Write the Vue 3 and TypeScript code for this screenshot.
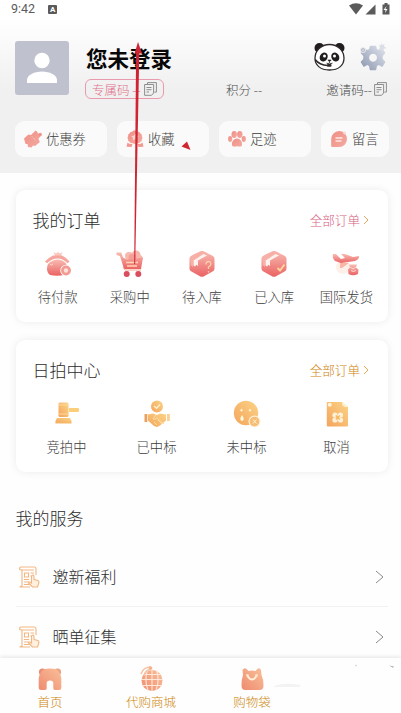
<script setup lang="ts">
interface Entry {
  label: string
  icon: string
}

const shortcuts: Entry[] = [
  { label: '优惠券', icon: 'coupon' },
  { label: '收藏', icon: 'badge' },
  { label: '足迹', icon: 'paw' },
  { label: '留言', icon: 'chat' },
]
const orders: Entry[] = [
  { label: '待付款', icon: 'purse' },
  { label: '采购中', icon: 'cart' },
  { label: '待入库', icon: 'boxq' },
  { label: '已入库', icon: 'boxok' },
  { label: '国际发货', icon: 'plane' },
]
const auctions: Entry[] = [
  { label: '竞拍中', icon: 'gavel' },
  { label: '已中标', icon: 'hands' },
  { label: '未中标', icon: 'sad' },
  { label: '取消', icon: 'cancel' },
]
const services: string[] = ['邀新福利', '晒单征集']
const tabs: Entry[] = [
  { label: '首页', icon: 'home' },
  { label: '代购商城', icon: 'globe' },
  { label: '购物袋', icon: 'bag' },
]
</script>

<template>
  <div class="screen">
    <svg class="defs" width="0" height="0" aria-hidden="true">
      <defs>
        <linearGradient id="pink" x1="0" y1="0" x2="0" y2="1">
          <stop offset="0" stop-color="#f8bcb2" /><stop offset="1" stop-color="#ea6263" />
        </linearGradient>
        <linearGradient id="soft" x1="0" y1="0" x2="1" y2="1">
          <stop offset="0" stop-color="#ef8f87" /><stop offset="1" stop-color="#f4aaa0" />
        </linearGradient>
        <linearGradient id="gold" x1="1" y1="0" x2="0" y2="1">
          <stop offset="0" stop-color="#fbd487" /><stop offset="1" stop-color="#f4a45c" />
        </linearGradient>
        <linearGradient id="peach" x1="1" y1="0" x2="0" y2="1">
          <stop offset="0" stop-color="#f9c09a" /><stop offset="1" stop-color="#ef8b6f" />
        </linearGradient>
        <linearGradient id="steel" x1="1" y1="0" x2="0" y2="1">
          <stop offset="0" stop-color="#dfe3ec" /><stop offset="1" stop-color="#8d98b0" />
        </linearGradient>
      </defs>
    </svg>

    <header class="header">
      <div class="status">
        <span class="clock">9:42</span>
        <span class="status-app">A</span>
        <svg class="signals" width="42" height="14" viewBox="0 0 42 14">
          <path d="M0 3.500Q7-.8 14 3.500L7 12.500Z" fill="#5b5b5b" />
          <path d="M26.500 2.500V12.500H16.500Z" fill="#5b5b5b" />
          <path d="M33.500 2.500h2V1h3v1.500h2v10h-7Z" fill="#5b5b5b" />
          <path d="M37.500 4l-3 4h2l-.5 3 2.500-4h-2Z" fill="#fff" />
        </svg>
      </div>

      <div class="profile">
        <div class="avatar">
          <svg width="54" height="54" viewBox="0 0 54 54">
            <circle cx="27" cy="19.500" r="7.700" fill="#fff" />
            <path d="M12 42v-3c0-5 7.500-8.500 15-8.500S42 34 42 39v3Z" fill="#fff" />
          </svg>
        </div>
        <div class="account">
          <div class="name-row">
            <h1 class="name">您未登录</h1>
            <div class="tools">
              <svg width="31" height="29" viewBox="0 0 31 29">
                <circle cx="5.500" cy="6" r="5" fill="#201c1f" />
                <circle cx="25.500" cy="6" r="5" fill="#201c1f" />
                <path d="M15.500 2.500C24 2.500 30 9 30 16S25 28 15.500 28 1 23 1 16 7 2.500 15.500 2.500Z" fill="#fff" stroke="#302a2d" stroke-width="1.300" />
                <ellipse cx="9.700" cy="15" rx="3.800" ry="4.700" transform="rotate(30 9.700 15)" fill="#201c1f" />
                <ellipse cx="21.300" cy="15" rx="3.800" ry="4.700" transform="rotate(-30 21.300 15)" fill="#201c1f" />
                <circle cx="10.500" cy="14" r="1.500" fill="#fff" />
                <circle cx="20.500" cy="14" r="1.500" fill="#fff" />
                <path d="M13.800 18h3.400l-1.700 1.700ZM15.500 19.500v1.500M12.500 21q1.500 1.200 3 0q1.500 1.200 3 0" fill="#201c1f" stroke="#201c1f" stroke-width=".6" />
                <path d="M1.200 17.500q4 5.500 12.500 6" fill="none" stroke="#302a2d" stroke-width="1.500" />
                <rect x="13" y="22" width="4.500" height="2.800" rx="1" fill="#302a2d" />
              </svg>
              <svg width="30" height="30" viewBox="0 0 30 30">
                <path fill="url(#steel)" fill-rule="evenodd" stroke="url(#steel)" stroke-width="1.500" stroke-linejoin="round" d="M12.500 4.500h5l.8 3.200 2.500 1.100L24 7l2.500 4-2.500 2.800v3.400l2.500 2.800-2.500 4-3.200-1.800-2.500 1.300-.8 4h-5l-.8-4-2.500-1.300L6 24l-2.500-4L6 17.200v-3.400L3.500 11 6 7l3.200 1.800 2.500-1.100ZM15 11a4.700 4.700 0 1 0 .1 0Z" />
                <circle cx="5" cy="8" r="2.500" fill="#b1b9ca" stroke="#eee" /><circle cx="5" cy="8" r=".8" fill="#eee" />
                <path d="M23 .5l1 2.500 2.500-1-.5 2.500 2.500 1.500-3 1-.5 2.500-2-2-2.500.5 1.500-2.500-1-2.500 2 .2Z" fill="#dadee6" />
              </svg>
            </div>
          </div>
          <div class="meta-row">
            <div class="code-tag">
              <span>专属码 --</span>
              <svg class="copy" width="13" height="14" viewBox="0 0 13 14">
                <path d="M3.500 2.500V.6h8.900v9.500h-2M.6 2.500h9v8.500l-2 2.300h-7ZM2.500 5.500h5M2.500 7.700h5M2.500 10h2.500" />
              </svg>
            </div>
            <span class="points">积分 --</span>
            <div class="invite">
              <span>邀请码--</span>
              <svg class="copy" width="13" height="14" viewBox="0 0 13 14">
                <path d="M3.500 2.500V.6h8.900v9.500h-2M.6 2.500h9v8.500l-2 2.300h-7ZM2.500 5.500h5M2.500 7.700h5M2.500 10h2.500" />
              </svg>
            </div>
          </div>
        </div>
      </div>

      <nav class="shortcuts">
        <div v-for="s in shortcuts" :key="s.label" class="pill">
          <svg width="18" height="18" viewBox="0 0 18 18">
            <g v-if="s.icon === 'coupon'">
              <path d="M0 8.500 4.500 4.500 7 5 11.500.5l2 1.500q-.3 2 1.700 1.700l1.300 2.800-2 2 .5 2 1 1.500-5 4-2-.5-1.500 2-3.500-.5-.5-3-2 0Z" fill="url(#soft)" />
              <path d="M8 6.500l4 4.500" stroke="#fad4ce" stroke-dasharray="1 1" /><circle cx="16.200" cy="4.500" r="1.700" fill="#ef9289" />
            </g>
            <g v-else-if="s.icon === 'badge'">
              <path d="M9 .5q2-.5 2.700 1.300 2.300-.3 2.800 1.700 2 .8 1.300 2.800 1.500 1.500.1 3 .5 2-1.500 2.500-.9 2-2.900 1.300Q9 14.800 6.500 13.100q-2 .7-2.900-1.300-2-.5-1.500-2.500-1.400-1.500.1-3-.7-2 1.300-2.800.5-2 2.800-1.700Q7 0 9 .5Z" fill="url(#soft)" />
              <path d="M1.500 12.500q2 2 5 1.500l-1 3-5-.3ZM16.500 12.500q-2 2-5 1.500l1 3 5-.3Z" fill="#f09a91" /><path d="M9 3.500l1.200 2.300 2.500.3-1.800 1.800.4 2.600L9 9.300l-2.300 1.200.4-2.600-1.800-1.800 2.500-.3Z" fill="#fbd7d2" />
            </g>
            <g v-else-if="s.icon === 'paw'" fill="url(#soft)">
              <ellipse cx="6.200" cy="4.500" rx="2.700" ry="3.400" /><ellipse cx="11.800" cy="4.500" rx="2.700" ry="3.400" />
              <ellipse cx="2.200" cy="9" rx="2.100" ry="2.900" /><ellipse cx="15.800" cy="9" rx="2.100" ry="2.900" />
              <path d="M9 8.500c3 0 5.500 3.500 5 6.200-.5 3-3 1.500-5 1.500s-4.500 1.500-5-1.500c-.5-2.700 2-6.200 5-6.200Z" />
            </g>
            <g v-else>
              <path d="M9 1a8 8 0 1 1 0 16H2.200q-1 0-1-1.200V9A8 8 0 0 1 9 1Z" fill="url(#soft)" />
              <path d="M5.500 8h7M5.500 11h6" stroke="#fce9e5" stroke-width="1.400" /><circle cx="14.500" cy="3" r="1.400" fill="#fbd5cf" />
            </g>
          </svg>
          <span>{{ s.label }}</span>
        </div>
      </nav>
    </header>

    <main class="content">
      <section class="card">
        <div class="card-head">
          <h2>我的订单</h2>
          <a class="all rose">全部订单<svg width="6" height="10" viewBox="0 0 6 10"><path d="M1 1l4 4-4 4" fill="none" stroke="#e6a760" /></svg></a>
        </div>
        <div class="grid five">
          <div v-for="o in orders" :key="o.label" class="cell">
            <svg width="28" height="28" viewBox="0 0 28 28">
              <g v-if="o.icon === 'purse'">
                <path d="M9.500 2l2.500 1.500L14 2l2 1.500L18.500 2 17 6h-6Z" fill="#f9c8c1" />
                <path d="M1 11.500Q4 8 9 5.500h9q5 2.500 7.500 6l-2 1.800Q19 8.500 13.500 8.500T3 13.300Z" fill="#f5a69e" />
                <path d="M4 14q4.500-4.500 9.500-4.500t8.500 4q2 3 1 6l-3 5.500q-7 1.500-14 0Q1 21 4 14Z" fill="url(#pink)" />
                <path d="M6 14q1 2 3 0" stroke="#fdd9d2" fill="none" />
                <circle cx="22" cy="20.500" r="5.700" fill="#fff" /><circle cx="22" cy="20.500" r="4.900" fill="#f29991" /><circle cx="22" cy="20.500" r="2.200" fill="#ffe0da" />
              </g>
              <g v-else-if="o.icon === 'cart'">
                <circle cx="13" cy="6" r="4" fill="#f8b8ad" /><circle cx="20" cy="5" r="4.500" fill="#f6b5ac" /><circle cx="16.500" cy="8" r="4" fill="#f59e93" /><circle cx="23.500" cy="8" r="3" fill="#f8b8ad" />
                <path d="M.5 2.500h4.700L7 7.500l4 2 16-2-2 11.500H8L4 6 .5 5Z" fill="url(#pink)" />
                <path d="M10 12.500h12M11 16h10" stroke="#ffd5b5" stroke-width="1.600" /><path d="M7 17l2 3h16" stroke="#f5a88f" fill="none" />
                <circle cx="10.700" cy="24" r="3" fill="#d94d5f" /><circle cx="22.300" cy="24" r="3" fill="#d94d5f" />
              </g>
              <g v-else-if="o.icon === 'plane'">
                <circle cx="11" cy="17" r="7" fill="#fdf0e9" /><path d="M1 4h3l5 5 4-1L9 4h4l8 3 6-1q.5 3-4 5l-14 2L3 11Q0 8 1 4Z" fill="url(#pink)" />
                <path d="M8 13h9l-7 5H8Z" fill="#f9b6a5" /><path d="M17 14.500h8l-1 3 2.500 2-.5 4.500q-5 2.500-9.500 0l-.5-4.500 2-2Z" fill="url(#pink)" />
                <path d="M18.500 17q2.500 4 5 0M19 20.500q2 2 5 0" stroke="#ffded8" fill="none" />
              </g>
              <g v-else>
                <path d="M14 1q1 0 2 .5l8.500 4.300Q26.500 7 26.500 8.500v10q0 2-1.500 2.800l-9 5q-2 1-4 0l-9-5q-1.500-.8-1.500-2.800v-10q0-1.500 1.500-2.500L12 1.500Z" fill="url(#pink)" />
                <path d="M2 7.500q3-3 7-4.500l5-2 5 2-10 5-4 3V17l-2.500-2Z" fill="#f6b0a7" />
                <path d="M5.500 15.500V10.500l10-6.500 3.500 1.500-9 5v5.500l-1.700-1.300-1.300 1.800Z" fill="#fff1ed" />
                <path v-if="o.icon === 'boxok'" d="M17.500 18l2.500 2.500 4.500-6" fill="none" stroke="#ffd59d" stroke-width="2" />
                <path v-else d="M18 14.500q0-3 2.500-3t2.300 2.700q0 1.500-2.300 2.800v2M20.500 21v1.500" fill="none" stroke="#ffd0a8" stroke-width="1.300" />
              </g>
            </svg>
            <span>{{ o.label }}</span>
          </div>
        </div>
      </section>

      <section class="card">
        <div class="card-head">
          <h2>日拍中心</h2>
          <a class="all amber">全部订单<svg width="6" height="10" viewBox="0 0 6 10"><path d="M1 1l4 4-4 4" fill="none" stroke="#e6a850" /></svg></a>
        </div>
        <div class="grid four">
          <div v-for="a in auctions" :key="a.label" class="cell">
            <svg width="28" height="28" viewBox="0 0 28 28">
              <g v-if="a.icon === 'gavel'">
                <rect x="5.500" y="2.500" width="10" height="14.500" rx="1.500" fill="url(#gold)" /><path d="M5.500 5h10M5.500 14h10" stroke="#fcdb9c" />
                <path d="M16 8h9.500q1.500 2.500 0 4H16Z" fill="#fbce7a" /><path d="M4 18h13l1.500 3v2H2.500v-2Z" fill="url(#gold)" /><path d="M2.500 23h16" stroke="#f4ba67" />
              </g>
              <g v-else-if="a.icon === 'hands'">
                <circle cx="14" cy="6.500" r="6" fill="url(#gold)" /><path d="M11 6l2.500 2.300L17 4.500" stroke="#fff1c7" stroke-width="1.500" fill="none" />
                <path d="M1.500 14h2.800v8H1.500Z" fill="#eca05b" /><path d="M24 14h2.800v7H24Z" fill="#fbd092" />
                <path d="M5 14.500l5-1 4 1.500 3-1.500 6 1v6l-6 5-3 1.500-3-1-6-5.500Z" fill="url(#gold)" /><path d="M13 15l-3 4q2 1 4-1l7 6M11 22l3 3M15 20l4 4" stroke="#fddc9d" fill="none" />
              </g>
              <g v-else-if="a.icon === 'sad'">
                <circle cx="13" cy="13" r="12.200" fill="url(#gold)" /><path d="M8.500 8.500l1.500 1.700-1.500 1.600L7 10.200ZM17 8.500l1.500 1.700-1.500 1.600-1.500-1.600Z" fill="#fff1c9" />
                <path d="M9 15q3.500 5 0 6-3.500-1 0-6Z" fill="#fff8dc" /><circle cx="21.500" cy="21.500" r="6" fill="#fff0d6" /><circle cx="21.500" cy="21.500" r="4.800" fill="#f6bd76" /><path d="M20 19.500l3.500 4M23.500 19.500l-3.500 4" stroke="#fff1d0" />
              </g>
              <g v-else>
                <path d="M4.500 2H19l6 5v18.500q0 1-1 1H5q-1.200 0-1.200-1V2.500Z" fill="url(#gold)" /><circle cx="6.800" cy="4.800" r="2" fill="#fff3d6" /><path d="M19 2l6 5h-3q-3-1-3-3Z" fill="#fff0cf" />
                <g fill="#fff1d8"><circle cx="12" cy="15" r="2.600" /><circle cx="17.500" cy="15" r="2.600" /><circle cx="12" cy="20" r="2.600" /><circle cx="17.500" cy="20" r="2.600" /></g><path d="M12.800 15.500l4 4M16.800 15.500l-4 4" stroke="#f7b75c" stroke-width="1.200" />
              </g>
            </svg>
            <span>{{ a.label }}</span>
          </div>
        </div>
      </section>

      <section class="services">
        <h2>我的服务</h2>
        <div v-for="s in services" :key="s" class="service">
          <svg width="21" height="22" viewBox="0 0 21 22" fill="none" stroke="#f1b783" stroke-width="1.100">
            <path d="M17 9V3q0-2-1.500-2H2Q.5 1 .7 3.500L3 4v16q-2 0-2 1h10M3 4h12M5.500 7h4v4h-4ZM11.500 7H15M11.500 10H14M5 13.500h5M5 16h5M5 18.500h6" />
            <path d="M12.500 15V10q1.500-2 2.500 0v3.500l4 1q1.500 1 .5 3.500l-1 3h-5l-4-4q.5-2 3 0Z" fill="#fff0df" />
          </svg>
          <span>{{ s }}</span>
          <svg class="chevron" width="9" height="14" viewBox="0 0 9 14"><path d="M1 1l7 6-7 6" fill="none" stroke="#8a8a8a" /></svg>
        </div>
      </section>
    </main>

    <footer class="tabbar">
      <div v-for="t in tabs" :key="t.label" class="tab">
        <svg width="26" height="26" viewBox="0 0 26 26">
          <g v-if="t.icon === 'home'">
            <circle cx="5.500" cy="6" r="3.600" fill="#e98c78" /><circle cx="20.500" cy="6" r="3.600" fill="#eea184" />
            <path d="M6.500 3.500q6.500-2 13 0 4 3 4.800 9v9q0 2.500-2.500 2.500h-4q-1.500 0-1.500-2V17q0-2.500-3.300-2.500T9.700 17v5q0 2-1.500 2H4.200q-2.500 0-2.500-2.500v-9q.8-6 4.800-9Z" fill="url(#peach)" />
          </g>
          <g v-else-if="t.icon === 'globe'">
            <circle cx="14" cy="14.500" r="10.500" fill="url(#peach)" />
            <path d="M3.500 13.500h21M5 19.500h18M5.500 8.500h17M14 3v22M9.500 4Q6 14 10 24M18.500 4Q22 14 18 24" stroke="#ffe8d9" stroke-width="1.100" fill="none" />
            <path d="M3 8Q5 1 13 1M6 10Q7 4 13 3" stroke="#f8c2a5" stroke-width="1.500" fill="none" /><circle cx="12.500" cy="2" r="1.800" fill="#f5b28e" />
          </g>
          <g v-else>
            <path d="M3.500 4Q6 0 9.500 5q3.500-1 7 0Q20 0 22 4l.5 5q2 4 2 10.500 0 4.500-4 4.500H6.500q-4 0-4-4.500Q2.500 13 4 9Z" fill="url(#peach)" />
            <path d="M8.500 10q4.500 7 9 0" stroke="#fff0d8" stroke-width="2" fill="none" /><circle cx="8.500" cy="9.500" r="1.400" fill="#ffe5c8" /><circle cx="17.500" cy="9.500" r="1.400" fill="#ffe5c8" />
          </g>
        </svg>
        <span>{{ t.label }}</span>
      </div>
    </footer>

    <svg class="marks" width="401" height="713" viewBox="0 0 401 713">
      <path d="M136.100 53h3.200L135.200 264h-1Z" fill="#cf2432" />
      <path d="M138 42l4 11.500h-7.500Z" fill="#cf2432" />
      <path d="M187 141.500l-5.500 5 9 3.500Z" fill="#d02632" />
      <path d="M274 686q12-4 26-1v2h-26Z" fill="#f3f3f3" />
      <circle cx="356" cy="665.500" r=".8" fill="#ccc" /><path d="M389 665.500l5 1-1 1.200Z" fill="#aaa" />
    </svg>
  </div>
</template>

<style>
body {
  background: #fefefe;
  overflow: hidden;
}
</style>

<style scoped>
.screen {
  position: relative;
  width: 401px;
  height: 713px;
  overflow: hidden;
  box-sizing: border-box;
  background: #fefefe;
  color: #3c3c3c;
  font-family: "Noto Sans CJK SC", sans-serif;
  font-size: 13px;
  font-weight: 300;
}
.screen svg { display: block; flex: none; }
.defs { position: absolute; }
h1, h2 { margin: 0; font-weight: 300; }
.header {
  height: 173px;
  background: linear-gradient(#fff 18px, #f0f0f0 90px);
}
.status {
  height: 18px;
  display: flex;
  align-items: center;
  padding: 0 10px 0 11px;
}
.clock { font: 400 12.5px/18px Roboto, sans-serif; color: #5b5b5b; }
.status-app {
  width: 9px;
  height: 9px;
  margin-left: 13px;
  border-radius: 1px;
  background: #5b5b5b;
  color: #fff;
  font: 700 8px/9px Roboto, sans-serif;
  text-align: center;
}
.signals { margin-left: auto; }
.profile { display: flex; padding: 23px 13px 0 15px; }
.avatar { width: 54px; height: 54px; border-radius: 3px; background: #bfc2ce; }
.account { flex: 1; margin-left: 16px; }
.name-row { height: 38px; display: flex; justify-content: space-between; }
.name {
  color: #080808;
  font-size: 21.500px;
  font-weight: 700;
  line-height: 33px;
  margin-left: 1px;
}
.tools { display: flex; gap: 13px; padding-top: 1px; }
.meta-row { height: 20px; display: flex; align-items: center; font-size: 12.500px; color: #4c4c4c; }
.code-tag {
  width: 79px;
  height: 20px;
  box-sizing: border-box;
  display: flex;
  align-items: center;
  gap: 3px;
  padding-left: 6px;
  border: 1px solid #e99aac;
  border-radius: 6px;
  color: #e0708a;
  white-space: nowrap;
}
.copy path { fill: none; stroke: #8e8e8e; stroke-width: 1; }
.points { margin-left: 62px; }
.invite { display: flex; align-items: center; gap: 2px; margin-left: auto; padding-right: 1px; }
.shortcuts {
  display: grid;
  grid-template-columns: 92px 92px 92px 68px;
  justify-content: space-between;
  padding: 22px 12px 0 15px;
}
.profile { height: 58px; }
.pill {
  height: 36px;
  display: flex;
  align-items: center;
  gap: 4px;
  padding: 0 0 0 9px;
  box-sizing: border-box;
  border-radius: 9px;
  background: #fafafa;
  font-size: 13.300px;
}
.pill span { line-height: 18px; padding-bottom: 1px; }
.content { padding: 17px 13px 0 15.500px; }
.card {
  height: 132px;
  margin-bottom: 18px;
  border-radius: 9px;
  background: #fff;
  box-shadow: 0 0 8px rgba(0, 0, 0, 0.08);
}
.card-head {
  height: 60px;
  display: flex;
  align-items: center;
  justify-content: space-between;
  padding: 0 19px 0 17px;
  box-sizing: border-box;
}
.card-head h2 { padding-bottom: 1px; }
h2 { font-size: 17px; line-height: 24px; color: #2c2c2c; }
.all { display: flex; align-items: center; gap: 3px; font-size: 12.600px; line-height: 18px; padding-bottom: 1px; }
.rose { color: #d75f80; }
.amber { color: #d08310; }
.grid { display: grid; padding: 0 6px; }
.five { grid-template-columns: repeat(5, 72.200px); }
.four { grid-template-columns: repeat(4, 90px); }
.cell { display: flex; flex-direction: column; align-items: center; white-space: nowrap; font-size: 13.300px; }
.cell span { margin-top: 9px; line-height: 19px; }
.services { padding-top: 16px; }
.service {
  height: 60px;
  display: flex;
  align-items: center;
  padding: 0 4px 0 3px;
  box-sizing: border-box;
  border-bottom: 1px solid #f2f2f2;
  color: #2c2c2c;
  font-size: 16px;
}
.services h2 { height: 41px; }
.service span { margin-left: 13px; padding-bottom: 1px; }
.service .chevron { margin-left: auto; }
.tabbar {
  position: absolute;
  left: 0;
  right: 0;
  bottom: 0;
  height: 55px;
  display: flex;
  background: #fefefe;
  box-shadow: 0 -1px 4px rgba(0, 0, 0, 0.11);
}
.tab {
  width: 101px;
  display: flex;
  flex-direction: column;
  align-items: center;
  padding: 8px 1px 0 0;
  box-sizing: border-box;
  font-size: 12.500px;
  color: #cc8408;
}
.tab span { line-height: 18px; margin-top: 1px; }
.marks { position: absolute; left: 0; top: 0; pointer-events: none; }
</style>
